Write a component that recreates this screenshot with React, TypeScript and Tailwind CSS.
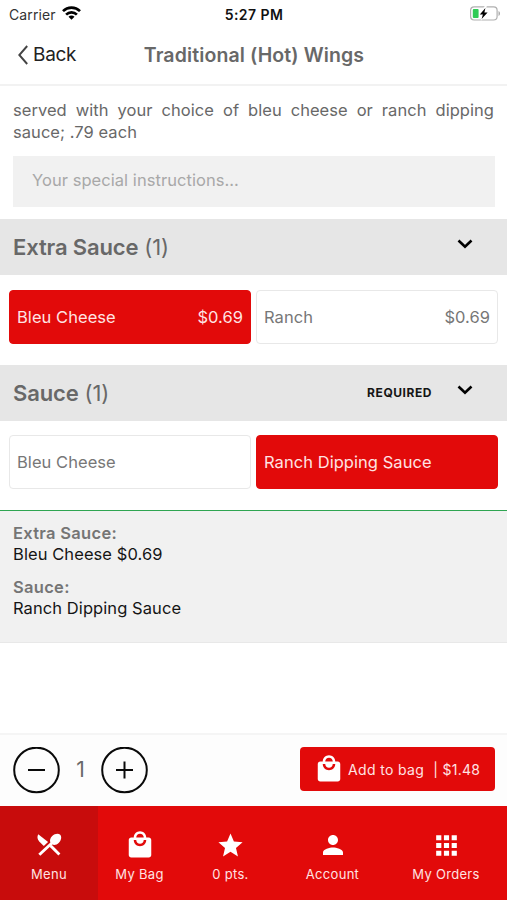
import { useState } from 'react'
import clsx from 'clsx'
import { MdApps, MdLocalMall, MdPerson, MdStar } from 'react-icons/md'

const GROUPS = [
  {
    name: 'Extra Sauce',
    required: false,
    options: [
      { name: 'Bleu Cheese', price: '$0.69' },
      { name: 'Ranch', price: '$0.69' },
    ],
  },
  {
    name: 'Sauce',
    required: true,
    options: [
      { name: 'Bleu Cheese', price: '' },
      { name: 'Ranch Dipping Sauce', price: '' },
    ],
  },
]

const TABS = [
  { label: 'Menu', Icon: CutleryIcon, width: 'w-[98px]', size: 30 },
  { label: 'My Bag', Icon: MdLocalMall, width: 'w-[83px]', size: 30 },
  { label: '0 pts.', Icon: MdStar, width: 'w-[99px]', size: 29 },
  { label: 'Account', Icon: MdPerson, width: 'w-[105px]', size: 30 },
  { label: 'My Orders', Icon: MdApps, width: 'w-[122px]', size: 31 },
]

// crossed knife and spoon, both filled
function CutleryIcon({ size, className }: { size: number; className?: string }) {
  return (
    <svg width={size} height={size} viewBox="0 0 30 30" fill="currentColor" className={className}>
      <path d="M4.2 4.2c-1.3 2.5-.9 5.2 1 7.2l4.6 4.7 4.3-4.2z" />
      <path d="m15.5 16.8 2.2-2.1 8.7 8.8-2 2z" />
      <path d="M18.4 14.6c1.8.9 4.5.2 6.5-1.8 2.5-2.5 3-6.2 1.3-8-1.8-1.7-5.5-1.2-8 1.3-2 2-2.7 4.7-1.8 6.5L4.3 23.7l2 2z" />
    </svg>
  )
}

function StatusBar() {
  return (
    <div className="grid h-7 grid-cols-3 items-center pl-[9px] pr-[6px] text-[14px]">
      <div className="flex items-center gap-[6px] text-[#333]">
        <span className="tracking-[0.1px]">Carrier</span>
        <svg width="19" height="14" viewBox="0 0 19 14" fill="none" stroke="#000" strokeWidth="2.7" className="-mt-[2px]">
          <path d="M1 5.1C5.7.5 13.3.5 18 5.1" />
          <path d="M4.1 8.6c3-2.9 7.8-2.9 10.8 0" />
          <path d="M9.5 13.7 6.5 10.7c1.7-1.5 4.3-1.5 6 0z" fill="#000" stroke="none" />
        </svg>
      </div>
      <span className="-ml-[2px] text-center font-semibold tracking-[0.45px] text-[#111]">5:27 PM</span>
      <svg width="31" height="15" viewBox="0 0 31 15" fill="none" className="-mt-[1px] justify-self-end">
        <rect x="0.6" y="0.8" width="26.5" height="13.2" rx="3.5" stroke="#b0b0b0" strokeWidth="1.2" />
        <path d="M28.5 5v5c2-.8 2-4.2 0-5z" fill="#aaa" />
        <rect x="2.8" y="3" width="5.8" height="9" rx="1" fill="#2fcb55" />
        <path d="M14.8 0 8.8 8.6h3.3L10.8 15l7.6-9.2h-3.3L16.8 0z" fill="#fff" />
        <path d="M15.4 2 9.8 8.4h3.1L11.6 13l6-6.6h-3.2z" fill="#000" />
      </svg>
    </div>
  )
}

function Chevron() {
  return (
    <svg width="16" height="10" viewBox="0 0 16 10" fill="none" stroke="#000" strokeWidth="2.6">
      <path d="m1.5 1.5 6.5 6.3 6.5-6.3" />
    </svg>
  )
}

export default function App() {
  const [selected, setSelected] = useState([0, 1])
  const [quantity, setQuantity] = useState(1)

  const select = (group: number, option: number) =>
    setSelected((prev) => prev.map((value, i) => (i === group ? option : value)))

  return (
    <div className="flex h-[900px] w-[507px] flex-col overflow-hidden bg-white font-['Inter',sans-serif] text-[#686868]">
      <StatusBar />

      <header className="grid h-[58px] grid-cols-[130px_1fr_130px] items-center border-b-2 border-[#f2f2f2] pb-[1px]">
        <button className="flex items-center gap-[5px] pl-[18px] text-[19px] tracking-[-0.3px] text-[#222]">
          <svg width="10" height="20" viewBox="0 0 10 20" fill="none" stroke="#444" strokeWidth="1.9" className="-mt-[1px]">
            <path d="M9.2 1 1.3 10l7.9 9" />
          </svg>
          Back
        </button>
        <h1 className="whitespace-nowrap pl-[1px] pt-[1px] text-center text-[19.5px] font-semibold tracking-[0.12px]">
          Traditional (Hot) Wings
        </h1>
      </header>

      <div className="px-[13px] pt-[13px]">
        <p className="text-justify text-[16.5px] leading-[22px] tracking-[0.05px]">
          served with your choice of bleu cheese or ranch dipping sauce; .79 each
        </p>
        <input
          placeholder="Your special instructions..."
          className="mt-[13px] block h-[51px] w-[482px] bg-[#f1f1f1] pb-[3px] pl-[19px] text-[16.5px] tracking-[0.05px] outline-none placeholder:text-[#a8a8a8]"
        />
      </div>

      {GROUPS.map(({ name, required, options }, group) => (
        <section key={name} className={group === 0 ? 'mt-3' : 'mt-[21px]'}>
          <div className="flex h-14 items-center bg-[#e6e6e6] pl-[13px] pr-[34px]">
            <h2 className="flex-1 pt-[1px] text-[22px] tracking-[-0.15px]">
              <span className="font-semibold">{name}</span> (1)
            </h2>
            {required && (
              <span className="mr-[25px] text-[12px] font-bold tracking-[0.55px] text-[#151515]">REQUIRED</span>
            )}
            <div className="-mt-[6px]">
              <Chevron />
            </div>
          </div>
          <div className={clsx('flex gap-[5px] pl-[9px]', group === 0 ? 'mt-[15px]' : 'mt-[14px]')}>
            {options.map((option, i) => (
              <button
                key={option.name}
                onClick={() => select(group, i)}
                className={clsx(
                  'flex h-[54px] w-[242px] items-center justify-between rounded-[4px] border px-[7px] text-[16.5px] tracking-[0.05px]',
                  selected[group] === i
                    ? 'border-[#e20a0a] bg-[#e20a0a] text-[#ffe3e3]'
                    : 'border-[#e8e8e8] bg-white text-[#777]',
                )}
              >
                <span>{option.name}</span>
                <span>{option.price}</span>
              </button>
            ))}
          </div>
        </section>
      ))}

      <div className="mt-[21px] h-px bg-[#2fa552]" />
      <div className="h-[132px] border-b border-[#e8e8e8] bg-[#f1f1f1] px-[13px] pt-3 text-[16.5px] leading-[21px]">
        {GROUPS.map(({ name, options }, group) => {
          const choice = options[selected[group]]
          return (
            <div key={name} className="mb-3">
              <p className="font-semibold tracking-[0.3px] text-[#757575]">{name}:</p>
              <p className="tracking-[0.08px] text-[#151515]">
                {choice.name} {choice.price}
              </p>
            </div>
          )
        })}
      </div>

      <div className="mt-auto flex h-[73px] items-center border-t-2 border-[#f5f5f5] bg-[#fdfdfd] px-[13px] pb-[1px]">
        <button
          aria-label="Decrease quantity"
          onClick={() => setQuantity(Math.max(1, quantity - 1))}
        >
          <svg width="47" height="47" viewBox="0 0 47 47" fill="none" stroke="#0a0a0a" strokeWidth="2">
            <circle cx="23.5" cy="23" r="22.3" />
            <path d="M15 23h17" />
          </svg>
        </button>
        <span className="w-[41px] text-center text-[21px]">{quantity}</span>
        <button aria-label="Increase quantity" onClick={() => setQuantity(quantity + 1)}>
          <svg width="47" height="47" viewBox="0 0 47 47" fill="none" stroke="#0a0a0a" strokeWidth="2">
            <circle cx="23.5" cy="23" r="22.3" />
            <path d="M15 23h17M23.5 14.5v17" />
          </svg>
        </button>
        <button className="-mr-[1px] -mt-[2px] ml-auto flex h-11 w-[195px] items-center whitespace-nowrap rounded-[4px] bg-[#e20a0a] pl-[14px] text-[14px] text-[#ffe3e3]">
          <MdLocalMall size={30} className="-mt-[1px] shrink-0 text-white" />
          <span className="ml-1 tracking-[0.35px]">Add to bag</span>
          <span className="ml-[9px] tracking-[0.3px]">| $1.48</span>
        </button>
      </div>

      <nav className="flex h-[94px] shrink-0 bg-[#e20a0a]">
        {TABS.map(({ label, Icon, width, size }, i) => (
          <a
            key={label}
            className={clsx('flex shrink-0 flex-col items-center pt-6 text-[13px] text-[#ffe3e3]', width, i === 0 && 'bg-[#c80c0c]')}
          >
            <span className="flex h-[30px] items-center">
              <Icon size={size} className="text-white" />
            </span>
            <span className="mt-1 leading-5 tracking-[0.3px]">{label}</span>
          </a>
        ))}
      </nav>
    </div>
  )
}
